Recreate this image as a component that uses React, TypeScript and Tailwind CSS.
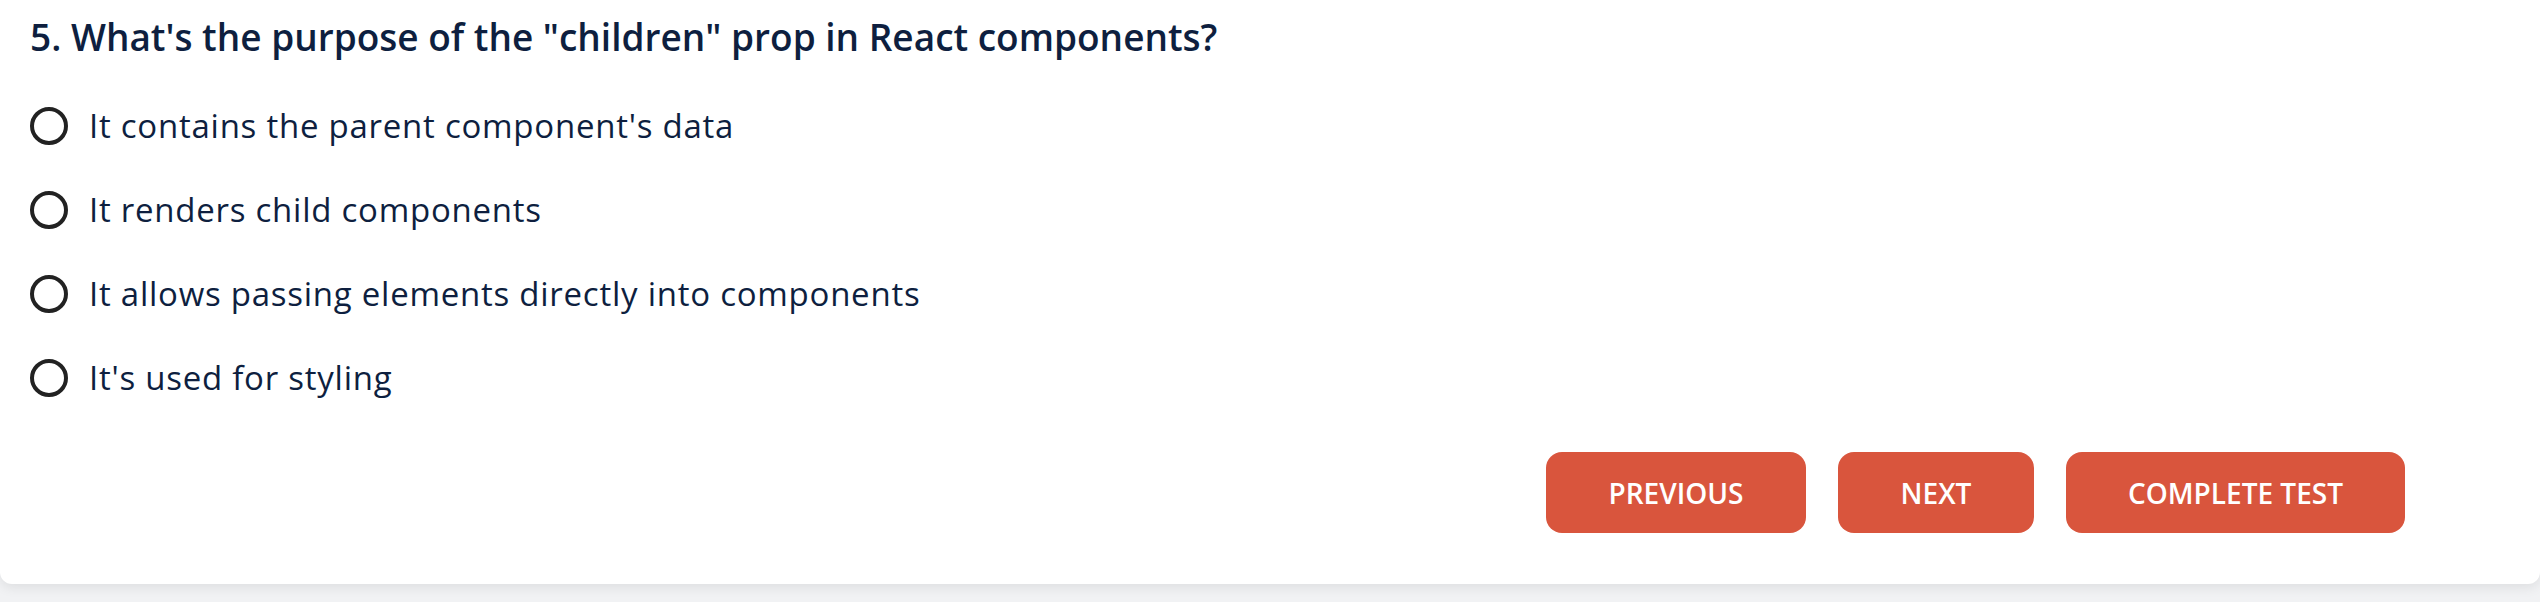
import React from 'react';

const options = [
  "It contains the parent component's data",
  'It renders child components',
  'It allows passing elements directly into components',
  "It's used for styling",
];

export default function App() {
  return (
    <div className="min-h-[602px] w-full bg-[#f1f2f4] font-['Open_Sans',sans-serif]">
      <div className="bg-white rounded-b-[12px] shadow-[0_4px_12px_rgba(0,0,0,0.08)] pl-[30px] pt-[15px] pb-[51px]">
        {/* Question */}
        <h2 className="text-[37px] leading-[44px] font-semibold text-[#0e1f3f]">
          5. What's the purpose of the "children" prop in React components?
        </h2>

        {/* Answers */}
        <div className="mt-[25px] flex flex-col">
          {options.map((opt, i) => (
            <label key={i} className="h-[84px] flex items-center gap-[21px] cursor-pointer">
              <span className="w-[38px] h-[38px] rounded-full border-[4px] border-[#222222] shrink-0" />
              <span className="text-[33px] tracking-[0.75px] text-[#0e1f3f]">{opt}</span>
            </label>
          ))}
        </div>

        {/* Navigation */}
        <div className="mt-[32px] flex justify-end gap-[32px] pr-[135px]">
          <button className="h-[81px] w-[260px] rounded-[16px] bg-[#d9553d] text-white text-[28px] font-semibold uppercase">
            Previous
          </button>
          <button className="h-[81px] w-[196px] rounded-[16px] bg-[#d9553d] text-white text-[28px] font-semibold uppercase">
            Next
          </button>
          <button className="h-[81px] w-[339px] rounded-[16px] bg-[#d9553d] text-white text-[28px] font-semibold uppercase">
            Complete Test
          </button>
        </div>
      </div>
    </div>
  );
}
